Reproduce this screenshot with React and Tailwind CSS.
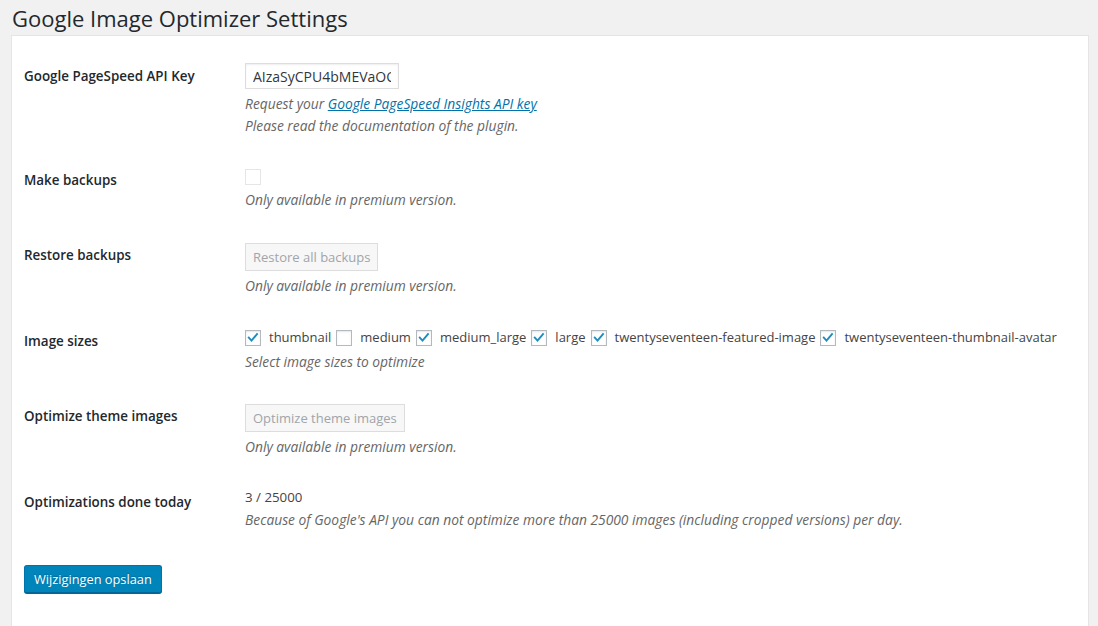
import React from 'react';

const font = { fontFamily: '"Open Sans", "Noto Sans", sans-serif' };

const Check = () => (
  <svg viewBox="0 0 16 16" className="w-[16px] h-[16px]">
    <path d="M3.2 7.6 L6.3 10.9 L12.6 3.6" fill="none" stroke="#1e8cbe" strokeWidth="2.2" strokeLinecap="square" />
  </svg>
);

const Checkbox = ({ checked, disabled }) => (
  <span
    className={`w-[16px] h-[16px] shrink-0 flex items-center justify-center border ${
      disabled
        ? 'border-[#e6e6e6] bg-white/50'
        : 'border-[#b4b9be] bg-white shadow-[inset_0_1px_2px_rgba(0,0,0,0.1)]'
    }`}
  >
    {checked && <Check />}
  </span>
);

const Desc = ({ children, className = '' }) => (
  <p className={`text-[13.8px] leading-[22px] italic text-[#666] ${className}`}>{children}</p>
);

const DisabledButton = ({ children }) => (
  <button
    disabled
    className="mt-[1px] h-[28px] px-[7px] border border-[#dddddd] bg-[#f7f7f7] text-[13px] text-[#a0a5aa] leading-[26px]"
  >
    {children}
  </button>
);

const Row = ({ label, children, extra = '' }) => (
  <div className={`flex items-start ${extra}`}>
    <div className="w-[221px] shrink-0 pt-[18px] text-[13.4px] leading-[20px] font-semibold text-[#23282d]">
      {label}
    </div>
    <div className="flex-1 py-[15px]">{children}</div>
  </div>
);

const sizes = [
  ['thumbnail', true],
  ['medium', false],
  ['medium_large', true],
  ['large', true],
  ['twentyseventeen-featured-image', true],
  ['twentyseventeen-thumbnail-avatar', true],
];

export default function App() {
  return (
    <div className="w-[1098px] h-[626px] overflow-hidden bg-[#f1f1f1] text-[#444]" style={font}>
      <h1 className="pl-[12px] pt-[4px] h-[35px] text-[22px] leading-[29px] text-[#23282d] font-normal">
        Google Image Optimizer Settings
      </h1>
      <div className="ml-[11px] w-[1078px] h-[600px] bg-white border border-[#e5e5e5] px-[12px] pt-[12px]">
        <Row label="Google PageSpeed API Key">
          <input
            type="text"
            readOnly
            value="AIzaSyCPU4bMEVaOQe7wXhC9dz"
            className="w-[154px] h-[26px] px-[7px] border border-[#dddddd] shadow-[inset_0_1px_2px_rgba(0,0,0,0.07)] text-[14px] text-[#32373c] outline-none"
          />
          <Desc className="mt-[4px]">
            Request your{' '}
            <a href="#" className="text-[#0073aa] underline">
              Google PageSpeed Insights API key
            </a>
          </Desc>
          <Desc>Please read the documentation of the plugin.</Desc>
        </Row>

        <Row label="Make backups">
          <div className="h-[20px] flex items-center">
            <Checkbox disabled />
          </div>
          <Desc className="mt-[2px] mb-[1px]">Only available in premium version.</Desc>
        </Row>

        <Row label="Restore backups">
          <DisabledButton>Restore all backups</DisabledButton>
          <Desc className="mt-[4px] mb-[1px]">Only available in premium version.</Desc>
        </Row>

        <Row label="Image sizes">
          <div className="h-[20px] flex items-center whitespace-nowrap text-[13px] text-[#444]">
            {sizes.map(([name, checked]) => (
              <label key={name} className="flex items-center mr-[5px]">
                <Checkbox checked={checked} />
                <span className="ml-[8px]">{name}</span>
              </label>
            ))}
          </div>
          <Desc className="mt-[3px]">Select image sizes to optimize</Desc>
        </Row>

        <Row label="Optimize theme images">
          <DisabledButton>Optimize theme images</DisabledButton>
          <Desc className="mt-[4px] mb-[1px]">Only available in premium version.</Desc>
        </Row>

        <Row label="Optimizations done today">
          <div className="-mt-[3px] text-[13.3px] leading-[22px] text-[#444]">3 / 25000</div>
          <Desc className="mt-[1px]">
            Because of Google's API you can not optimize more than 25000 images (including cropped versions) per day.
          </Desc>
        </Row>

        <div className="mt-[19px]">
          <button className="h-[28px] px-[9px] bg-[#0085ba] border border-[#0073aa] border-b-[#006799] shadow-[0_1px_0_#006799] text-white text-[12.8px] leading-[26px] rounded-[3px] [text-shadow:0_-1px_1px_#006799]">
            Wijzigingen opslaan
          </button>
        </div>
      </div>
    </div>
  );
}
